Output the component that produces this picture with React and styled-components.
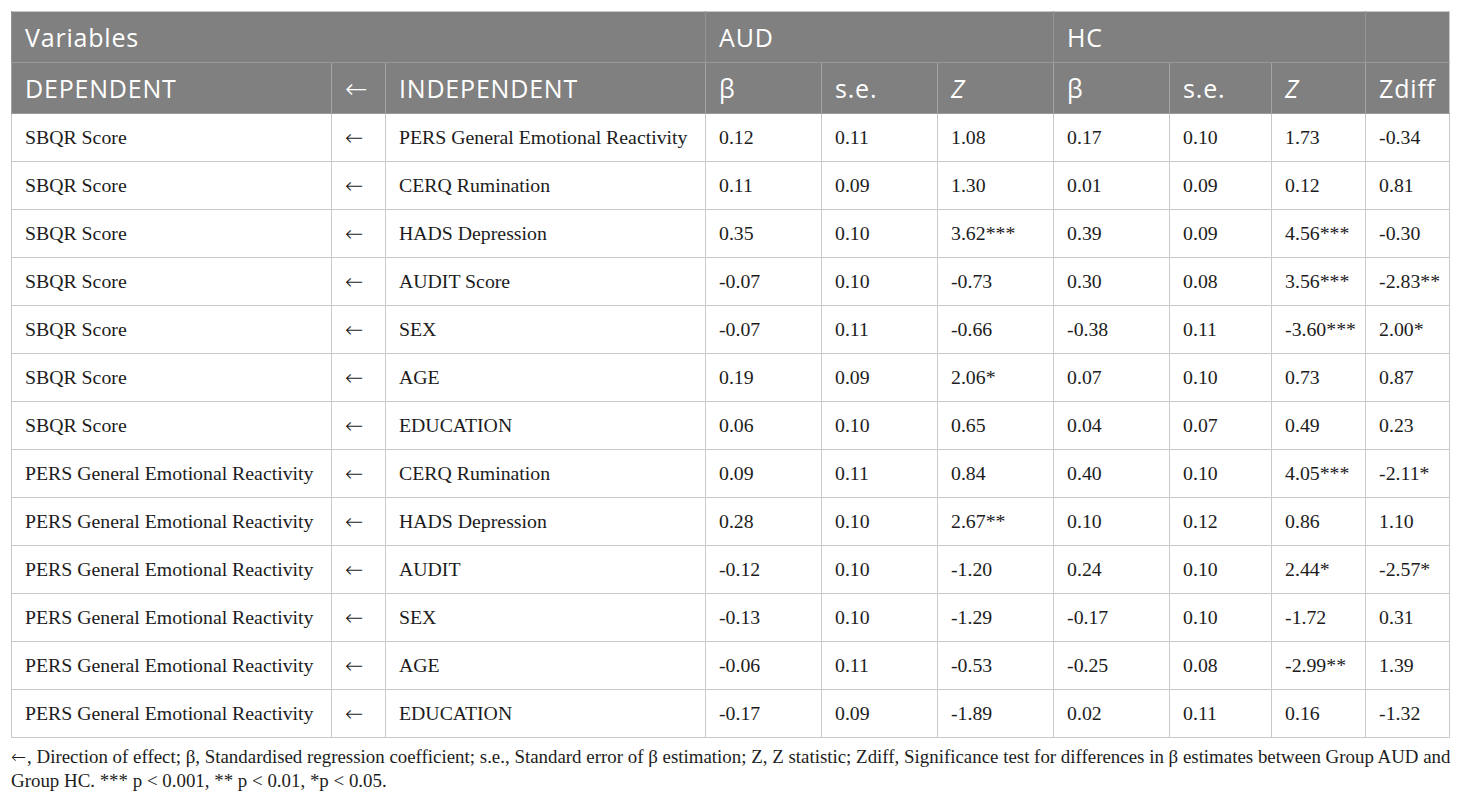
import React from "react"
import styled, { createGlobalStyle } from "styled-components"

const GlobalStyle = createGlobalStyle`
  html, body {
    margin: 0;
    padding: 0;
    background: #ffffff;
  }
`

const Page = styled.div`
  padding: 11px 11px 0 11px;
  width: 1438px;
`

const Table = styled.table`
  width: 1438px;
  border-collapse: collapse;
  table-layout: fixed;
  border: 1px solid #c9c9c9;
`

const HeadRow = styled.tr`
  background-color: #808080;
  height: 51px;
`

const HeadCell = styled.th`
  color: #ffffff;
  font-family: "Open Sans", "Liberation Sans", sans-serif;
  font-weight: 400;
  font-size: 25px;
  letter-spacing: 0.8px;
  font-style: ${p => (p.$italic ? "italic" : "normal")};
  text-align: left;
  padding: 0 13px;
  border-left: 1px solid ${p => (p.$top ? "#959595" : "#a3a3a3")};
  border-bottom: 1px solid #9a9a9a;
  white-space: nowrap;
`

const BodyRow = styled.tr`
  height: 48px;
`

const Cell = styled.td`
  font-family: "Liberation Serif", "Times New Roman", serif;
  font-size: 19.8px;
  color: #1c1c1c;
  padding: 0 13px;
  border: 1px solid #c9c9c9;
  white-space: nowrap;
`

const Arrow = styled.span`
  display: inline-block;
  font-family: "DejaVu Sans", sans-serif;
  font-weight: 200;
  font-size: ${p => p.$size || 20}px;
  margin-right: ${p => p.$gap || 0}px;
`

const Note = styled.p`
  margin: 7px 0 0 0;
  width: 1440px;
  font-family: "Liberation Serif", "Times New Roman", serif;
  font-size: 18.9px;
  line-height: 24px;
  color: #1c1c1c;
`

const widths = [320, 54, 320, 116, 116, 116, 116, 102, 94, 84]

const rows = [
  ["SBQR Score", "PERS General Emotional Reactivity", "0.12", "0.11", "1.08", "0.17", "0.10", "1.73", "-0.34"],
  ["SBQR Score", "CERQ Rumination", "0.11", "0.09", "1.30", "0.01", "0.09", "0.12", "0.81"],
  ["SBQR Score", "HADS Depression", "0.35", "0.10", "3.62***", "0.39", "0.09", "4.56***", "-0.30"],
  ["SBQR Score", "AUDIT Score", "-0.07", "0.10", "-0.73", "0.30", "0.08", "3.56***", "-2.83**"],
  ["SBQR Score", "SEX", "-0.07", "0.11", "-0.66", "-0.38", "0.11", "-3.60***", "2.00*"],
  ["SBQR Score", "AGE", "0.19", "0.09", "2.06*", "0.07", "0.10", "0.73", "0.87"],
  ["SBQR Score", "EDUCATION", "0.06", "0.10", "0.65", "0.04", "0.07", "0.49", "0.23"],
  ["PERS General Emotional Reactivity", "CERQ Rumination", "0.09", "0.11", "0.84", "0.40", "0.10", "4.05***", "-2.11*"],
  ["PERS General Emotional Reactivity", "HADS Depression", "0.28", "0.10", "2.67**", "0.10", "0.12", "0.86", "1.10"],
  ["PERS General Emotional Reactivity", "AUDIT", "-0.12", "0.10", "-1.20", "0.24", "0.10", "2.44*", "-2.57*"],
  ["PERS General Emotional Reactivity", "SEX", "-0.13", "0.10", "-1.29", "-0.17", "0.10", "-1.72", "0.31"],
  ["PERS General Emotional Reactivity", "AGE", "-0.06", "0.11", "-0.53", "-0.25", "0.08", "-2.99**", "1.39"],
  ["PERS General Emotional Reactivity", "EDUCATION", "-0.17", "0.09", "-1.89", "0.02", "0.11", "0.16", "-1.32"],
]

export default function App() {
  return (
    <Page>
      <GlobalStyle />
      <Table>
        <colgroup>
          {widths.map((w, i) => (
            <col key={i} style={{ width: w }} />
          ))}
        </colgroup>
        <thead>
          <HeadRow>
            <HeadCell $top colSpan={3}>Variables</HeadCell>
            <HeadCell $top colSpan={3}>AUD</HeadCell>
            <HeadCell $top colSpan={3}>HC</HeadCell>
            <HeadCell $top />
          </HeadRow>
          <HeadRow>
            <HeadCell>DEPENDENT</HeadCell>
            <HeadCell><Arrow $size={27}>←</Arrow></HeadCell>
            <HeadCell>INDEPENDENT</HeadCell>
            <HeadCell>β</HeadCell>
            <HeadCell>s.e.</HeadCell>
            <HeadCell $italic>Z</HeadCell>
            <HeadCell>β</HeadCell>
            <HeadCell>s.e.</HeadCell>
            <HeadCell $italic>Z</HeadCell>
            <HeadCell>Zdiff</HeadCell>
          </HeadRow>
        </thead>
        <tbody>
          {rows.map((r, i) => (
            <BodyRow key={i}>
              <Cell>{r[0]}</Cell>
              <Cell><Arrow $size={22}>←</Arrow></Cell>
              {r.slice(1).map((v, j) => (
                <Cell key={j}>{v}</Cell>
              ))}
            </BodyRow>
          ))}
        </tbody>
      </Table>
      <Note>
        <Arrow $size={18} $gap={1}>←</Arrow>, Direction of effect; β, Standardised regression coefficient; s.e., Standard error of β estimation; Z, Z statistic; Zdiff, Significance test for differences in β estimates between Group AUD and Group HC. *** p &lt; 0.001, ** p &lt; 0.01, *p &lt; 0.05.
      </Note>
    </Page>
  )
}
